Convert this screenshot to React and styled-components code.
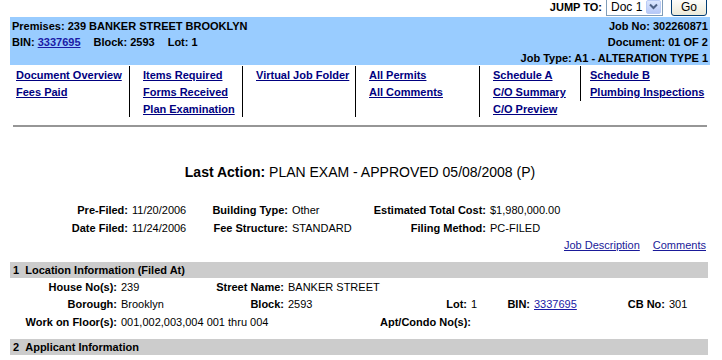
import React from "react";
import styled, { createGlobalStyle } from "styled-components";

const GlobalStyle = createGlobalStyle`
  body {
    margin: 0;
    background: #fff;
    color: #000;
    font-family: "Liberation Sans", Arial, sans-serif;
    font-size: 11px;
  }
  * {
    box-sizing: border-box;
  }
`;

const navColumns = [
  { w: 120, pl: 6, border: "right", links: ["Document Overview", "Fees Paid"] },
  { w: 113, pl: 13, border: "right", links: ["Items Required", "Forms Received", "Plan Examination"] },
  { w: 113, pl: 13, border: "right", links: ["Virtual Job Folder"] },
  { w: 124, pl: 13, border: "right", links: ["All Permits", "All Comments"] },
  { w: 100, pl: 13, border: "none", links: ["Schedule A", "C/O Summary", "C/O Preview"] },
  { w: 130, pl: 9, border: "left", links: ["Schedule B", "Plumbing Inspections"] },
];

function App() {
  return (
    <>
      <GlobalStyle />
      <Page>
        <JumpRow>
          <JumpLabel>JUMP TO:</JumpLabel>
          <FakeSelect>
            <span>Doc 1</span>
            <SelectArrow>
              <svg width="9" height="7" viewBox="0 0 9 7">
                <path d="M1 1.5 L4.5 5 L8 1.5" fill="none" stroke="#4d6185" strokeWidth="2" />
              </svg>
            </SelectArrow>
          </FakeSelect>
          <GoButton>Go</GoButton>
        </JumpRow>

        <Banner>
          <BannerSide>
            <div>Premises: 239 BANKER STREET BROOKLYN</div>
            <div>
              <Pair>BIN: <BlueLink>3337695</BlueLink></Pair>
              <Pair>Block: 2593</Pair>
              <Pair>Lot: 1</Pair>
            </div>
          </BannerSide>
          <BannerSide $right>
            <div>Job No: 302260871</div>
            <div>Document: 01 OF 2</div>
            <div>Job Type: A1 - ALTERATION TYPE 1</div>
          </BannerSide>
        </Banner>

        <Nav>
          {navColumns.map((col, i) => (
            <NavCol key={i} $w={col.w} $pl={col.pl} $border={col.border}>
              {col.links.map((l) => (
                <NavLink key={l} href="#">{l}</NavLink>
              ))}
            </NavCol>
          ))}
        </Nav>

        <Rule />

        <LastAction>
          <b>Last Action:</b> PLAN EXAM - APPROVED 05/08/2008 (P)
        </LastAction>

        <InfoGrid>
          <Label>Pre-Filed:</Label>
          <Value>11/20/2006</Value>
          <Label>Building Type:</Label>
          <Value>Other</Value>
          <Label>Estimated Total Cost:</Label>
          <Value>$1,980,000.00</Value>

          <Label>Date Filed:</Label>
          <Value>11/24/2006</Value>
          <Label>Fee Structure:</Label>
          <Value>STANDARD</Value>
          <Label>Filing Method:</Label>
          <Value>PC-FILED</Value>
        </InfoGrid>

        <SideLinks>
          <PlainLink href="#">Job Description</PlainLink>
          <PlainLink href="#">Comments</PlainLink>
        </SideLinks>

        <SectionBand>1&nbsp;&nbsp;Location Information (Filed At)</SectionBand>

        <LocationGrid>
          <Label>House No(s):</Label>
          <Value>239</Value>
          <Label>Street Name:</Label>
          <Value $span={7}>BANKER STREET</Value>

          <Label>Borough:</Label>
          <Value>Brooklyn</Value>
          <Label>Block:</Label>
          <Value>2593</Value>
          <Label>Lot:</Label>
          <Value>1</Value>
          <Label>BIN:</Label>
          <Value><BlueLink>3337695</BlueLink></Value>
          <Label>CB No:</Label>
          <Value>301</Value>

          <Label>Work on Floor(s):</Label>
          <Value $span={3}>001,002,003,004 001 thru 004</Value>
          <Label>Apt/Condo No(s):</Label>
          <Value $span={5}></Value>
        </LocationGrid>

        <SectionBand $gap={8}>2&nbsp;&nbsp;Applicant Information</SectionBand>
      </Page>
    </>
  );
}

const Page = styled.div`
  width: 700px;
  margin-left: 10px;
`;

const JumpRow = styled.div`
  display: flex;
  justify-content: flex-end;
  align-items: center;
  height: 21px;
  margin-top: -4px;
  padding-right: 3px;
`;

const JumpLabel = styled.span`
  font-weight: bold;
  font-size: 11px;
  margin-right: 4px;
`;

const FakeSelect = styled.div`
  display: flex;
  align-items: center;
  justify-content: space-between;
  width: 57px;
  height: 18px;
  border: 1px solid #7f9db9;
  background: #fff;
  padding-left: 4px;
  font-size: 12px;
`;

const SelectArrow = styled.span`
  display: flex;
  align-items: center;
  justify-content: center;
  width: 15px;
  height: 14px;
  margin-right: 1px;
  border: 1px solid #b9cbf5;
  border-radius: 2px;
  background: linear-gradient(#dbe6fe, #b6c8f7);
`;

const GoButton = styled.button`
  width: 36px;
  height: 19px;
  margin-left: 8px;
  padding: 0;
  border: 1px solid #003c74;
  border-radius: 3px;
  background: linear-gradient(#ffffff, #ece9d8);
  font-family: "Liberation Sans", Arial, sans-serif;
  font-size: 12px;
  color: #000;
`;

const Banner = styled.div`
  display: flex;
  justify-content: space-between;
  height: 48px;
  padding: 1px 2px 0;
  background: #99ccff;
  font-weight: bold;
  font-size: 11px;
  line-height: 16px;
`;

const BannerSide = styled.div`
  text-align: ${(p) => (p.$right ? "right" : "left")};
`;

const Pair = styled.span`
  margin-right: 13px;
`;

const BlueLink = styled.a`
  color: #1a1aa6;
  text-decoration: underline;
`;

const Nav = styled.div`
  display: flex;
  margin-top: 1px;
  height: 51px;
`;

const NavCol = styled.div`
  width: ${(p) => p.$w}px;
  padding-left: ${(p) => p.$pl}px;
  padding-top: 1px;
  line-height: 17px;
  border-right: ${(p) => (p.$border === "right" ? "1px solid #000" : "none")};
  border-left: ${(p) => (p.$border === "left" ? "1px solid #000" : "none")};
  align-self: ${(p) => (p.$border === "left" ? "flex-start" : "stretch")};
`;

const NavLink = styled.a`
  display: block;
  white-space: nowrap;
  font-weight: bold;
  font-size: 11px;
  color: #000080;
  text-decoration: underline;
`;

const Rule = styled.div`
  margin: 8px 3px 0;
  border-top: 2px solid #969696;
`;

const LastAction = styled.div`
  margin-top: 37px;
  text-align: center;
  font-size: 14px;
  line-height: 17px;
`;

const InfoGrid = styled.div`
  display: grid;
  grid-template-columns: 120px 70px 90px 70px 128px 1fr;
  grid-auto-rows: 18px;
  margin-top: 20px;
  align-items: center;
`;

const Label = styled.div`
  text-align: right;
  padding-right: 2px;
  font-weight: bold;
  white-space: nowrap;
`;

const Value = styled.div`
  padding-left: 2px;
  white-space: nowrap;
  grid-column: ${(p) => (p.$span ? `span ${p.$span}` : "auto")};
`;

const SideLinks = styled.div`
  display: flex;
  justify-content: flex-end;
  gap: 13px;
  padding-right: 4px;
  line-height: 17px;
`;

const PlainLink = styled.a`
  color: #1a1a99;
  text-decoration: underline;
`;

const SectionBand = styled.div`
  margin-top: ${(p) => p.$gap ?? 8}px;
  margin-right: 2px;
  height: 16px;
  padding-left: 3px;
  background: #cccccc;
  font-weight: bold;
  font-size: 11px;
  line-height: 16px;
`;

const LocationGrid = styled.div`
  display: grid;
  grid-template-columns: 109px 81px 86px 94px 89px 31px 32px 68px 67px 1fr;
  grid-auto-rows: 17.5px;
  align-items: center;
`;

export default App;
